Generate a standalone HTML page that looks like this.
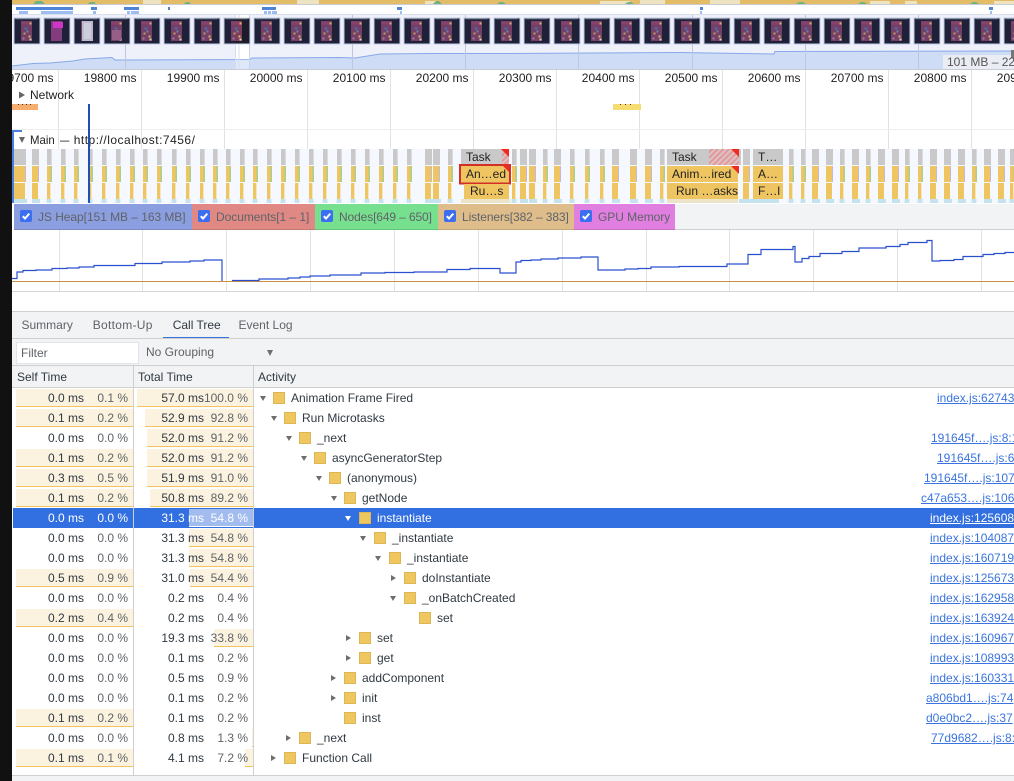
<!DOCTYPE html>
<html><head><meta charset="utf-8"><style>
html,body{margin:0;padding:0;background:#fff}
#p{position:relative;width:1014px;height:781px;overflow:hidden;background:#fff;font:12px/20px "Liberation Sans",sans-serif;color:#303942;filter:blur(.3px)}
#p>*{position:absolute}
svg{display:block}
svg text{font:12px "Liberation Sans",sans-serif}
.tab{top:315px;color:#5f6368}
.h{top:367px;color:#303942}
.r{position:relative;height:20px;white-space:nowrap}
.r>*{position:absolute;top:0;font-style:normal;font-weight:400;text-decoration:none}
.s{left:16px;width:117px;top:1px!important;height:17px;background:#fbf3df;border-bottom:1px solid #f2c55c}
.t{right:761px;top:1px!important;height:17px;background:#fbf3df;border-bottom:1px solid #f2c55c}
.a{right:930px;color:#303942}.b{right:886px;color:#5f6368}.c{right:810px;color:#303942}.d{right:766px;color:#5f6368}
.ic{top:4px!important;width:10px;height:10px;background:#efc75e;border:1px solid #dcb75a}
.n{color:#303942}
.l{color:#3a74e0;text-decoration:underline!important}
.dn{top:8px!important;width:0;height:0;border-left:3.5px solid transparent;border-right:3.5px solid transparent;border-top:5.5px solid #6e6e6e}
.rt{top:6.5px!important;width:0;height:0;border-top:3.5px solid transparent;border-bottom:3.5px solid transparent;border-left:5.5px solid #6e6e6e}
.sel{background:linear-gradient(90deg,#fff 13px,#326fe0 13px)}
.sel .a,.sel .b,.sel .c,.sel .d,.sel .n,.sel .l{color:#fff}
.sel .t{background:#a2bcef;border-bottom-color:#fff}
.sel .dn{border-top-color:#fff}
.tr{top:204px;height:25px;line-height:26px;color:#5f6368;border-bottom:1px solid rgba(0,0,0,.12);white-space:nowrap}
.tr svg{position:absolute;left:6px;top:6px}
.tr span{position:absolute;left:24px;letter-spacing:-.05px}
</style></head><body><div id="p">

<svg style="left:0;top:0" width="1014" height="230" viewBox="0 0 1014 230">
<defs>
<filter id="bl" x="-2%" y="-10%" width="104%" height="120%"><feGaussianBlur stdDeviation=".35"/></filter>
<g id="f"><rect x=".5" y=".5" width="26" height="26" fill="#1b1f2b" stroke="#d2d8e8"/><rect x="2" y="1" width="22" height="1" fill="#555a66"/><rect x="7.5" y="3.5" width="11" height="20" fill="#7b3d5f"/><rect x="8" y="4" width="10" height="3" fill="#8e3f66"/><rect x="16" y="5" width="2" height="2" fill="#d8c060"/><rect x="11" y="10" width="3" height="2" fill="#4d6fa8"/><rect x="13" y="13" width="2" height="2" fill="#5f8fb0"/><rect x="10" y="15" width="2" height="2" fill="#c4a24f"/><rect x="15" y="18" width="2" height="2" fill="#d8c060"/><rect x="16" y="21" width="2" height="2" fill="#e3d9a0"/><rect x="9" y="20" width="2" height="2" fill="#b07a98"/></g>
<g id="c"><rect x="0" y="149" width="4" height="16" fill="#c9c9c9"/><rect x="4" y="149" width="1" height="16" fill="#dcdcdc"/><rect x="0" y="166" width="3.5" height="16" fill="#efc561"/><rect x="3.5" y="166" width="1.5" height="16" fill="#a8cf90"/><rect x="0" y="183" width="3" height="16" fill="#efc561"/><rect x="3" y="183" width="1" height="16" fill="#f5e6c0"/><rect x="-.5" y="199" width="5" height="4" fill="#c4e3ef"/></g>
<g id="e"><rect x="0" y="149" width="7" height="16" fill="#c9c9c9"/><rect x="0" y="166" width="6" height="16" fill="#efc561"/><rect x="6" y="166" width="1" height="16" fill="#c6b6e0"/><rect x="0" y="183" width="6" height="16" fill="#efc561"/><rect x="0" y="199" width="8" height="4" fill="#c4e3ef"/></g>
<pattern id="hatch" width="4" height="4" patternUnits="userSpaceOnUse" patternTransform="rotate(45)"><rect width="4" height="4" fill="#d9c3c3"/><rect width="2" height="4" fill="#e5979a"/></pattern>
</defs>
<rect x="0" y="0" width="1014" height="4.3" fill="#e2bc66"/>
<rect x="0" y="4" width="1014" height="1" fill="#c8cbd2"/>
<g fill="#eee3c0"><rect x="143" y="0" width="18" height="4"/><rect x="297" y="0" width="22" height="4"/><rect x="425" y="1" width="14" height="3"/><rect x="600" y="1" width="30" height="3"/><rect x="640" y="0" width="25" height="4"/><rect x="710" y="0" width="30" height="4"/><rect x="905" y="1" width="12" height="3"/><rect x="994" y="1" width="20" height="3"/><rect x="870" y="1" width="20" height="3"/></g>
<g fill="#6fb27f"><path d="M33 4l3-3h6l3 3zM88 4l2-2h4l2 2zM184 4l2-2h3l2 2zM433 4l3-3h3l3 3zM497 4l3-2h3l3 2zM625 4l3-2h3l3 2zM796 4l3-2h4l3 2zM858 4l3-2h3l3 2zM970 4l3-2h3l3 2z"/></g>
<rect x="12" y="14" width="1002" height="1" fill="#d8deeb"/>
<g fill="#4f85d6"><rect x="16" y="7" width="57" height="3"/><rect x="91" y="7" width="6" height="3"/><rect x="124" y="7" width="15" height="3"/><rect x="168" y="7" width="2" height="3"/><rect x="262" y="7" width="14" height="3"/><rect x="397" y="7" width="5" height="3"/><rect x="700" y="7" width="3" height="3"/><rect x="989" y="7" width="4" height="3"/></g>
<g fill="#9dbcf0"><rect x="19" y="11" width="9" height="3"/><rect x="41" y="11" width="32" height="3"/><rect x="93" y="11" width="3" height="3"/><rect x="127" y="11" width="3" height="3"/><rect x="131" y="11" width="8" height="3"/><rect x="264" y="11" width="3" height="3"/><rect x="268" y="11" width="3" height="3"/><rect x="272" y="11" width="5" height="3"/><rect x="400" y="11" width="2" height="3"/><rect x="700" y="11" width="2" height="3"/><rect x="990" y="11" width="2" height="3"/></g>
<path d="M12 66L33 63.5L50 63L73 61L85 59L112 57.5L115 60L250 59.5L252 58L340 57.5L355 58L380 54L430 53.5L500 53.5L680 52.5L774 54L775 51.5L1014 51V69H12Z" fill="#dee8fa" stroke="none"/>
<path d="M12 66L33 63.5L50 63L73 61L85 59L112 57.5L115 60L250 59.5L252 58L340 57.5L355 58L380 54L430 53.5L500 53.5L680 52.5L774 54L775 51.5L1014 51" fill="none" stroke="#8fb0ed" stroke-width="1"/>
<g fill="#cbd2e2"><rect x="125" y="15" width="1" height="54"/><rect x="352" y="15" width="1" height="54"/><rect x="465" y="15" width="1" height="54"/><rect x="578" y="15" width="1" height="54"/><rect x="692" y="15" width="1" height="54"/><rect x="805" y="15" width="1" height="54"/><rect x="918" y="15" width="1" height="54"/></g>
<rect x="235" y="15" width="1" height="54" fill="#d6dded"/><rect x="238.5" y="15" width="1" height="54" fill="#d6dded"/><rect x="249" y="15" width="1" height="54" fill="#d6dded"/>
<g filter="url(#bl)">
<use href="#f" x="13.5" y="17.5"/><use href="#f" x="43.5" y="17.5"/><use href="#f" x="73.5" y="17.5"/><use href="#f" x="103.5" y="17.5"/><use href="#f" x="133.5" y="17.5"/><use href="#f" x="163.5" y="17.5"/><use href="#f" x="193.5" y="17.5"/><use href="#f" x="223.5" y="17.5"/><use href="#f" x="253.5" y="17.5"/><use href="#f" x="283.5" y="17.5"/><use href="#f" x="313.5" y="17.5"/><use href="#f" x="343.5" y="17.5"/><use href="#f" x="373.5" y="17.5"/><use href="#f" x="403.5" y="17.5"/><use href="#f" x="433.5" y="17.5"/><use href="#f" x="463.5" y="17.5"/><use href="#f" x="493.5" y="17.5"/><use href="#f" x="523.5" y="17.5"/><use href="#f" x="553.5" y="17.5"/><use href="#f" x="583.5" y="17.5"/><use href="#f" x="613.5" y="17.5"/><use href="#f" x="643.5" y="17.5"/><use href="#f" x="673.5" y="17.5"/><use href="#f" x="703.5" y="17.5"/><use href="#f" x="733.5" y="17.5"/><use href="#f" x="763.5" y="17.5"/><use href="#f" x="793.5" y="17.5"/><use href="#f" x="823.5" y="17.5"/><use href="#f" x="853.5" y="17.5"/><use href="#f" x="883.5" y="17.5"/><use href="#f" x="913.5" y="17.5"/><use href="#f" x="943.5" y="17.5"/><use href="#f" x="973.5" y="17.5"/><use href="#f" x="1003.5" y="17.5"/>
<rect x="51" y="21" width="11" height="20" fill="#8a3a78"/><rect x="53" y="22" width="10" height="6" fill="#e030c8"/><rect x="82" y="21" width="11" height="20" fill="#c9c3cc"/><rect x="84" y="23" width="7" height="16" fill="#dcd8de"/><rect x="112" y="30" width="9" height="10" fill="#a0607f"/>
</g>
<path d="M12 15H235V69H12ZM249 15H1014V69H249Z" fill="#3a5cc8" fill-opacity=".085"/>
<rect x="943" y="55" width="71" height="14" fill="#eaedf4"/>
<rect x="1011" y="50" width="3" height="8" fill="#777"/>
<rect x="12" y="69" width="1002" height="1" fill="#c8ccd5"/>

<g fill="#e2e2e2"><rect x="58" y="70" width="1" height="79"/><rect x="141" y="70" width="1" height="79"/><rect x="224" y="70" width="1" height="79"/><rect x="307" y="70" width="1" height="79"/><rect x="390" y="70" width="1" height="79"/><rect x="473" y="70" width="1" height="79"/><rect x="556" y="70" width="1" height="79"/><rect x="639" y="70" width="1" height="79"/><rect x="722" y="70" width="1" height="79"/><rect x="805" y="70" width="1" height="79"/><rect x="888" y="70" width="1" height="79"/><rect x="971" y="70" width="1" height="79"/></g>
<rect x="12" y="129" width="1002" height="1" fill="#eeeeee"/>
<rect x="12" y="104" width="26" height="6" fill="#f5ae6f"/>
<rect x="613" y="104" width="28" height="6" fill="#f7dc72"/>
<g fill="#333"><rect x="18" y="104" width="1" height="1"/><rect x="22" y="104" width="1" height="1"/><rect x="26" y="104" width="1" height="1"/><rect x="30" y="104" width="1" height="1"/><rect x="620" y="104" width="1" height="1"/><rect x="625" y="104" width="1" height="1"/><rect x="630" y="104" width="1" height="1"/></g>
<path d="M19 91.5L25 95L19 98.5Z" fill="#666"/>
<text x="30" y="99" fill="#222">Network</text>
<g fill="#222" text-anchor="end"><text x="53.5" y="82">19700 ms</text><text x="136.5" y="82">19800 ms</text><text x="219.5" y="82">19900 ms</text><text x="302.5" y="82">20000 ms</text><text x="385.5" y="82">20100 ms</text><text x="468.5" y="82">20200 ms</text><text x="551.5" y="82">20300 ms</text><text x="634.5" y="82">20400 ms</text><text x="717.5" y="82">20500 ms</text><text x="800.5" y="82">20600 ms</text><text x="883.5" y="82">20700 ms</text><text x="966.5" y="82">20800 ms</text><text x="1049.5" y="82">20900 ms</text></g>
<text x="947" y="66" fill="#555">101 MB – 229 MB</text>
<path d="M19 137H25L22 143Z" fill="#666"/>
<text x="30" y="144" fill="#222" textLength="24.7" lengthAdjust="spacingAndGlyphs">Main</text>
<text x="60" y="144" fill="#222" textLength="9.3" lengthAdjust="spacingAndGlyphs">—</text>
<text x="73.7" y="144" fill="#222" style="letter-spacing:.5px">http://localhost:7456/</text>

<rect x="14" y="149" width="1000" height="54" fill="#f5f8fe"/>
<g>
<use href="#e" x="14" y="0"/><use href="#e" x="19" y="0"/><use href="#e" x="32" y="0"/>
<use href="#c" x="47" y="0"/><use href="#c" x="61" y="0"/><use href="#c" x="74" y="0"/><use href="#c" x="88" y="0"/><use href="#c" x="102" y="0"/><use href="#c" x="116" y="0"/><use href="#c" x="130" y="0"/><use href="#c" x="143" y="0"/><use href="#c" x="157" y="0"/><use href="#c" x="172" y="0"/><use href="#c" x="186" y="0"/><use href="#c" x="200" y="0"/><use href="#c" x="213" y="0"/><use href="#c" x="226" y="0"/><use href="#c" x="240" y="0"/><use href="#c" x="253" y="0"/><use href="#c" x="267" y="0"/><use href="#c" x="281" y="0"/><use href="#c" x="295" y="0"/><use href="#c" x="309" y="0"/><use href="#c" x="323" y="0"/><use href="#c" x="337" y="0"/><use href="#c" x="351" y="0"/><use href="#c" x="365" y="0"/><use href="#c" x="379" y="0"/><use href="#c" x="393" y="0"/><use href="#c" x="407" y="0"/>
<use href="#e" x="425" y="0"/><use href="#e" x="433" y="0"/><use href="#c" x="448" y="0"/>
<use href="#c" x="512" y="0"/><use href="#e" x="520" y="0"/><use href="#e" x="529" y="0"/><use href="#c" x="543" y="0"/><use href="#e" x="554" y="0"/><use href="#c" x="570" y="0"/><use href="#c" x="585" y="0"/><use href="#c" x="600" y="0"/><use href="#e" x="612" y="0"/><use href="#e" x="630" y="0"/><use href="#e" x="645" y="0"/><use href="#c" x="660" y="0"/>
<use href="#e" x="743" y="0"/><use href="#c" x="789" y="0"/><use href="#c" x="801" y="0"/><use href="#e" x="812" y="0"/><use href="#e" x="826" y="0"/><use href="#c" x="840" y="0"/><use href="#e" x="852" y="0"/><use href="#c" x="866" y="0"/><use href="#e" x="878" y="0"/><use href="#e" x="892" y="0"/><use href="#c" x="905" y="0"/><use href="#c" x="918" y="0"/><use href="#e" x="930" y="0"/><use href="#e" x="944" y="0"/><use href="#e" x="958" y="0"/><use href="#c" x="972" y="0"/><use href="#e" x="984" y="0"/><use href="#e" x="998" y="0"/><use href="#c" x="1010" y="0"/>
</g>
<rect x="461" y="149" width="48" height="16" fill="#c9c9c9"/>
<rect x="502" y="149" width="7" height="16" fill="url(#hatch)"/>
<path d="M501 149H509V157Z" fill="#f02a20"/>
<text x="466" y="161" fill="#222">Task</text>
<rect x="460" y="165" width="50" height="18.5" fill="#efc561" stroke="#d22f27" stroke-width="2"/>
<path d="M502 165H509V172Z" fill="#f02a20"/>
<text x="466" y="178" fill="#222">An…ed</text>
<rect x="464" y="184" width="45" height="15" fill="#efc561"/>
<text x="470" y="195" fill="#222">Ru…s</text>
<rect x="461" y="199" width="49" height="4" fill="#ebe4c8"/>
<rect x="667" y="149" width="74" height="16" fill="#c9c9c9"/>
<rect x="709" y="149" width="30" height="16" fill="url(#hatch)"/>
<path d="M731 149H739V157Z" fill="#f02a20"/>
<text x="672" y="161" fill="#222">Task</text>
<rect x="667" y="166" width="71" height="16" fill="#efc561"/>
<path d="M731 166H739V174Z" fill="#f02a20"/>
<text x="672" y="178" fill="#222">Anim…ired</text>
<rect x="667" y="183" width="4" height="16" fill="#efc561"/>
<rect x="671" y="183" width="67" height="16" fill="#efc561"/>
<text x="676" y="195" fill="#222">Run …asks</text>
<rect x="667" y="199" width="71" height="4" fill="#ebe4c8"/>
<rect x="739" y="199" width="40" height="4" fill="#c4e3ef"/>
<rect x="753" y="149" width="30" height="16" fill="#c9c9c9"/>
<text x="758" y="161" fill="#222">T…</text>
<rect x="753" y="166" width="30" height="16" fill="#efc561"/>
<text x="758" y="178" fill="#222">A…</text>
<rect x="753" y="183" width="30" height="16" fill="#efc561"/>
<text x="758" y="195" fill="#222">F…l</text>
<rect x="12" y="130" width="2" height="73" fill="#4a7fe0"/>
<rect x="12" y="130" width="10" height="2" fill="#4a7fe0"/>
<rect x="88" y="104" width="2" height="99" fill="#2350b0"/>
</svg>

<div style="left:14px;top:204px;width:1000px;height:25px;background:#f1f3f4;border-bottom:1px solid #cfcfcf"></div>
<div class="tr" style="left:14px;width:178px;background:#8b9ee0"><svg width="12" height="12"><rect width="12" height="12" rx="2" fill="#3b6ef0"/><path d="M2.8 6.2L5 8.5L9.3 3.6" fill="none" stroke="#fff" stroke-width="2"/></svg><span>JS Heap[151 MB – 163 MB]</span></div>
<div class="tr" style="left:192px;width:123px;background:#e08984"><svg width="12" height="12"><rect width="12" height="12" rx="2" fill="#3b6ef0"/><path d="M2.8 6.2L5 8.5L9.3 3.6" fill="none" stroke="#fff" stroke-width="2"/></svg><span>Documents[1 – 1]</span></div>
<div class="tr" style="left:315px;width:123px;background:#77e08f"><svg width="12" height="12"><rect width="12" height="12" rx="2" fill="#3b6ef0"/><path d="M2.8 6.2L5 8.5L9.3 3.6" fill="none" stroke="#fff" stroke-width="2"/></svg><span style="letter-spacing:-.12px">Nodes[649 – 650]</span></div>
<div class="tr" style="left:438px;width:136px;background:#dfbd8a"><svg width="12" height="12"><rect width="12" height="12" rx="2" fill="#3b6ef0"/><path d="M2.8 6.2L5 8.5L9.3 3.6" fill="none" stroke="#fff" stroke-width="2"/></svg><span style="letter-spacing:-.1px">Listeners[382 – 383]</span></div>
<div class="tr" style="left:574px;width:101px;background:#e07fe0"><svg width="12" height="12"><rect width="12" height="12" rx="2" fill="#3b6ef0"/><path d="M2.8 6.2L5 8.5L9.3 3.6" fill="none" stroke="#fff" stroke-width="2"/></svg><span>GPU Memory</span></div>

<svg style="left:0;top:230px" width="1014" height="82" viewBox="0 230 1014 82">
<g fill="#e2e2e2"><rect x="59" y="230" width="1" height="61"/><rect x="142" y="230" width="1" height="61"/><rect x="226" y="230" width="1" height="61"/><rect x="310" y="230" width="1" height="61"/><rect x="394" y="230" width="1" height="61"/><rect x="478" y="230" width="1" height="61"/><rect x="562" y="230" width="1" height="61"/><rect x="646" y="230" width="1" height="61"/><rect x="729" y="230" width="1" height="61"/><rect x="813" y="230" width="1" height="61"/><rect x="897" y="230" width="1" height="61"/><rect x="981" y="230" width="1" height="61"/></g>
<rect x="12" y="281" width="1002" height="1" fill="#c98f45"/>
<rect x="12" y="291" width="1002" height="1" fill="#d5d5d5"/>
<path d="M12 278.5H17V272H23V270.5H36V270H52V268.5H67V268H79V267H94V265.5H135V263.5H162V262H190V261H204V260H222V281M232 280.5H259V279H288V278H300V277H310V276H330V275H361V273H385V272.5H414V272H447V269.5H470V268.5H500V273H516V262H521V260.5H531V260H541V259H558V258H581V257H598V270H625V269H638V268.5H651V267H679V266.5H727V264H748V254.5H761V249.5H793V246.5H795V262H802V258.5H809V256.5H820V253.5H842V251.5H859V248H886V246.5H900V244.5H908V242.5H927V240.5H932V261H940V260.5H954V259.5H963V256.5H983V254.5H994V253.5H1005V252.5H1014" fill="none" stroke="#2a50cf" stroke-width="1.2"/>
<rect x="12" y="311" width="1002" height="1" fill="#cfcfcf"/>
</svg>

<div style="left:12px;top:312px;width:1002px;height:26px;background:#f1f3f4"></div>
<div class="tab" style="left:21.5px">Summary</div>
<div class="tab" style="left:92.7px;letter-spacing:.3px">Bottom-Up</div>
<div class="tab" style="left:172.7px;color:#303942">Call Tree</div>
<div class="tab" style="left:238.5px">Event Log</div>
<div style="left:163px;top:337px;width:66px;height:2px;background:#3a74e0"></div>
<div style="left:12px;top:338px;width:1002px;height:1px;background:#cfcfcf"></div>
<div style="left:12px;top:339px;width:1002px;height:26px;background:#f1f3f4"></div>
<div style="left:16px;top:342px;width:121px;height:20px;background:#fff;border:1px solid #e2e4e7"></div>
<div style="left:21px;top:343px;color:#5f6368">Filter</div>
<div style="left:146px;top:342px;color:#5f6368">No Grouping</div>
<div style="left:267px;top:350px;width:0;height:0;border-left:3.5px solid transparent;border-right:3.5px solid transparent;border-top:6px solid #6e6e6e"></div>
<div style="left:12px;top:365px;width:1002px;height:1px;background:#cfcfcf"></div>
<div style="left:12px;top:366px;width:1002px;height:21px;background:#f1f3f4"></div>
<div style="left:12px;top:387px;width:1002px;height:1px;background:#cfcfcf"></div>
<div class="h" style="left:17px">Self Time</div>
<div class="h" style="left:138px">Total Time</div>
<div class="h" style="left:258px">Activity</div>

<div style="left:0;top:388px;width:1014px">
<div class="r"><i class="s"></i><i class="t" style="left:137px"></i><em class="a">0.0 ms</em><em class="b">0.1 %</em><em class="c">57.0 ms</em><em class="d">100.0 %</em><i class="dn" style="left:259.5px"></i><i class="ic" style="left:273px"></i><span class="n" style="left:291px">Animation Frame Fired</span><a class="l" style="left:937px">index.js:62743</a></div>
<div class="r"><i class="s"></i><i class="t" style="left:145px"></i><em class="a">0.1 ms</em><em class="b">0.2 %</em><em class="c">52.9 ms</em><em class="d">92.8 %</em><i class="dn" style="left:270.5px"></i><i class="ic" style="left:284px"></i><span class="n" style="left:302px">Run Microtasks</span></div>
<div class="r"><i class="t" style="left:147px"></i><em class="a">0.0 ms</em><em class="b">0.0 %</em><em class="c">52.0 ms</em><em class="d">91.2 %</em><i class="dn" style="left:285.5px"></i><i class="ic" style="left:299px"></i><span class="n" style="left:317px">_next</span><a class="l" style="left:931px">191645f….js:8:1</a></div>
<div class="r"><i class="s"></i><i class="t" style="left:147px"></i><em class="a">0.1 ms</em><em class="b">0.2 %</em><em class="c">52.0 ms</em><em class="d">91.2 %</em><i class="dn" style="left:300.5px"></i><i class="ic" style="left:314px"></i><span class="n" style="left:332px">asyncGeneratorStep</span><a class="l" style="left:937px">191645f….js:6</a></div>
<div class="r"><i class="s"></i><i class="t" style="left:147px"></i><em class="a">0.3 ms</em><em class="b">0.5 %</em><em class="c">51.9 ms</em><em class="d">91.0 %</em><i class="dn" style="left:315.5px"></i><i class="ic" style="left:329px"></i><span class="n" style="left:347px">(anonymous)</span><a class="l" style="left:924px">191645f….js:107</a></div>
<div class="r"><i class="s"></i><i class="t" style="left:150px"></i><em class="a">0.1 ms</em><em class="b">0.2 %</em><em class="c">50.8 ms</em><em class="d">89.2 %</em><i class="dn" style="left:330.5px"></i><i class="ic" style="left:344px"></i><span class="n" style="left:362px">getNode</span><a class="l" style="left:921px">c47a653….js:106</a></div>
<div class="r sel"><i class="t" style="left:189px"></i><em class="a">0.0 ms</em><em class="b">0.0 %</em><em class="c">31.3 ms</em><em class="d">54.8 %</em><i class="dn" style="left:345px"></i><i class="ic" style="left:359px"></i><span class="n" style="left:377px">instantiate</span><a class="l" style="left:930px">index.js:125608</a></div>
<div class="r"><i class="t" style="left:189px"></i><em class="a">0.0 ms</em><em class="b">0.0 %</em><em class="c">31.3 ms</em><em class="d">54.8 %</em><i class="dn" style="left:360px"></i><i class="ic" style="left:374px"></i><span class="n" style="left:392px">_instantiate</span><a class="l" style="left:930px">index.js:104087</a></div>
<div class="r"><i class="t" style="left:189px"></i><em class="a">0.0 ms</em><em class="b">0.0 %</em><em class="c">31.3 ms</em><em class="d">54.8 %</em><i class="dn" style="left:375px"></i><i class="ic" style="left:389px"></i><span class="n" style="left:407px">_instantiate</span><a class="l" style="left:930px">index.js:160719</a></div>
<div class="r"><i class="s"></i><i class="t" style="left:190px"></i><em class="a">0.5 ms</em><em class="b">0.9 %</em><em class="c">31.0 ms</em><em class="d">54.4 %</em><i class="rt" style="left:391px"></i><i class="ic" style="left:404px"></i><span class="n" style="left:422px">doInstantiate</span><a class="l" style="left:930px">index.js:125673</a></div>
<div class="r"><em class="a">0.0 ms</em><em class="b">0.0 %</em><em class="c">0.2 ms</em><em class="d">0.4 %</em><i class="dn" style="left:390px"></i><i class="ic" style="left:404px"></i><span class="n" style="left:422px">_onBatchCreated</span><a class="l" style="left:930px">index.js:162958</a></div>
<div class="r"><i class="s"></i><em class="a">0.2 ms</em><em class="b">0.4 %</em><em class="c">0.2 ms</em><em class="d">0.4 %</em><i class="ic" style="left:419px"></i><span class="n" style="left:437px">set</span><a class="l" style="left:930px">index.js:163924</a></div>
<div class="r"><i class="t" style="left:214px"></i><em class="a">0.0 ms</em><em class="b">0.0 %</em><em class="c">19.3 ms</em><em class="d">33.8 %</em><i class="rt" style="left:346px"></i><i class="ic" style="left:359px"></i><span class="n" style="left:377px">set</span><a class="l" style="left:930px">index.js:160967</a></div>
<div class="r"><em class="a">0.0 ms</em><em class="b">0.0 %</em><em class="c">0.1 ms</em><em class="d">0.2 %</em><i class="rt" style="left:346px"></i><i class="ic" style="left:359px"></i><span class="n" style="left:377px">get</span><a class="l" style="left:930px">index.js:108993</a></div>
<div class="r"><em class="a">0.0 ms</em><em class="b">0.0 %</em><em class="c">0.5 ms</em><em class="d">0.9 %</em><i class="rt" style="left:331px"></i><i class="ic" style="left:344px"></i><span class="n" style="left:362px">addComponent</span><a class="l" style="left:930px">index.js:160331</a></div>
<div class="r"><em class="a">0.0 ms</em><em class="b">0.0 %</em><em class="c">0.1 ms</em><em class="d">0.2 %</em><i class="rt" style="left:331px"></i><i class="ic" style="left:344px"></i><span class="n" style="left:362px">init</span><a class="l" style="left:926px">a806bd1….js:74</a></div>
<div class="r"><i class="s"></i><em class="a">0.1 ms</em><em class="b">0.2 %</em><em class="c">0.1 ms</em><em class="d">0.2 %</em><i class="ic" style="left:344px"></i><span class="n" style="left:362px">inst</span><a class="l" style="left:926px">d0e0bc2….js:37</a></div>
<div class="r"><i class="t" style="left:252px"></i><em class="a">0.0 ms</em><em class="b">0.0 %</em><em class="c">0.8 ms</em><em class="d">1.3 %</em><i class="rt" style="left:286px"></i><i class="ic" style="left:299px"></i><span class="n" style="left:317px">_next</span><a class="l" style="left:931px">77d9682….js:8:1</a></div>
<div class="r"><i class="s"></i><i class="t" style="left:245px"></i><em class="a">0.1 ms</em><em class="b">0.1 %</em><em class="c">4.1 ms</em><em class="d">7.2 %</em><i class="rt" style="left:271px"></i><i class="ic" style="left:284px"></i><span class="n" style="left:302px">Function Call</span></div>
</div>

<div style="left:133px;top:366px;width:1px;height:409px;background:#cfcfcf"></div>
<div style="left:253px;top:366px;width:1px;height:409px;background:#cfcfcf"></div>
<div style="left:12px;top:775px;width:1002px;height:1px;background:#cfcfcf"></div>
<div style="left:12px;top:776px;width:1002px;height:5px;background:#f1f3f4"></div>
<div style="left:0;top:0;width:12px;height:781px;background:#111"></div>
</div></body></html>
